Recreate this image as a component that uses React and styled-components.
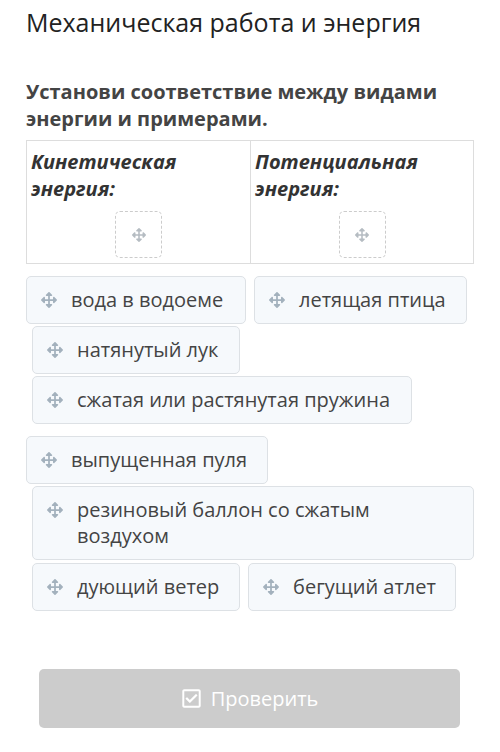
import React from 'react';
import styled, { createGlobalStyle } from 'styled-components';
import { FaArrowsAlt, FaRegCheckSquare } from 'react-icons/fa';

const GlobalStyle = createGlobalStyle`
  body {
    margin: 0;
    background: #fff;
    font-family: "Open Sans", "Noto Sans", sans-serif;
  }
`

const Page = styled.div`
  width: 500px;
  height: 752px;
  padding: 0 26px;
  box-sizing: border-box;
  display: flex;
  flex-direction: column;
`

const Title = styled.div`
  margin-top: 6px;
  font-size: 25px;
  line-height: 32px;
  color: #222;
`

const Question = styled.div`
  margin-top: 40px;
  font-size: 20px;
  line-height: 27px;
  font-weight: bold;
  color: #444;
`

const Table = styled.div`
  margin-top: 8px;
  display: grid;
  grid-template-columns: 223px 1fr;
  border: 1px solid #ddd;
  height: 124px;
  box-sizing: border-box;
`

const Column = styled.div`
  display: flex;
  flex-direction: column;
  padding: 7px 4px 0;
  border-left: ${props => props.first ? 'none' : '1px solid #ddd'};
`

const Heading = styled.div`
  font-size: 20px;
  line-height: 27px;
  font-weight: bold;
  font-style: italic;
  color: #333;
`

const Target = styled.div`
  align-self: center;
  margin-top: 9px;
  width: 47px;
  height: 47px;
  box-sizing: border-box;
  border: 1px dashed #ccc;
  border-radius: 5px;
  display: flex;
  align-items: center;
  justify-content: center;
  color: #b5bcc2;
`

const Items = styled.div`
  margin-top: 10px;
  display: flex;
  flex-direction: column;
`

const Row = styled.div`
  display: flex;
  gap: 8px;
  padding-left: ${props => props.indent || 0}px;
  margin-top: ${props => props.top || 2}px;
`

const Chip = styled.div`
  display: flex;
  align-items: flex-start;
  box-sizing: border-box;
  width: ${props => props.w}px;
  min-height: 48px;
  padding: 10px 14px;
  background: #f6f9fc;
  border: 1px solid #dde1e5;
  border-radius: 5px;
  font-size: 20px;
  line-height: 26px;
  color: #444;
`

const Grip = styled.span`
  flex: none;
  display: flex;
  align-items: center;
  height: 26px;
  margin-right: 14px;
  color: #a3b1bd;
`

const Button = styled.div`
  margin: 58px 14px 0 13px;
  height: 59px;
  border-radius: 5px;
  background: #cccccc;
  color: #fff;
  display: flex;
  align-items: center;
  justify-content: center;
  gap: 9px;
  font-size: 20px;
`

const rows = [
  { indent: 0, top: 0, items: [['вода в водоеме', 220], ['летящая птица', 213]] },
  { indent: 6, items: [['натянутый лук', 208]] },
  { indent: 6, items: [['сжатая или растянутая пружина', 380]] },
  { indent: 0, top: 12, items: [['выпущенная пуля', 242]] },
  { indent: 6, items: [['резиновый баллон со сжатым воздухом', 442]] },
  { indent: 6, top: 3, items: [['дующий ветер', 208], ['бегущий атлет', 208]] },
];

const App = () => (
  <Page>
    <GlobalStyle />
    <Title>Механическая работа и энергия</Title>
    <Question>Установи соответствие между видами энергии и примерами.</Question>
    <Table>
      <Column first>
        <Heading>Кинетическая<br />энергия:</Heading>
        <Target><FaArrowsAlt size={14} /></Target>
      </Column>
      <Column>
        <Heading>Потенциальная<br />энергия:</Heading>
        <Target><FaArrowsAlt size={14} /></Target>
      </Column>
    </Table>
    <Items>
      {rows.map((row, i) => (
        <Row key={i} indent={row.indent} top={row.top}>
          {row.items.map(([text, w]) => (
            <Chip key={text} w={w}>
              <Grip><FaArrowsAlt size={16} /></Grip>
              <span>{text}</span>
            </Chip>
          ))}
        </Row>
      ))}
    </Items>
    <Button>
      <FaRegCheckSquare size={21} />
      Проверить
    </Button>
  </Page>
);

export default App;
